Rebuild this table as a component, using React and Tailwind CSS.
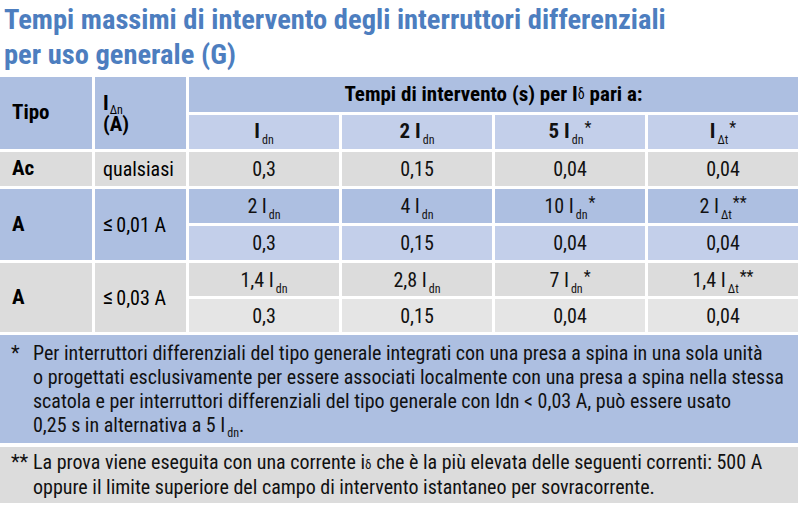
import React from "react";

const F = { fontFamily: "'Roboto Condensed', Roboto, sans-serif", fontStretch: "75%" };

const Sub = ({ children }) => (
  <span className="relative top-[6px] text-[12px] ml-[2px] font-normal">{children}</span>
);

const Idn = ({ pre, star, bold, sub = "dn" }) => (
  <span className="inline-flex items-baseline">
    {pre ? <span>{pre}&nbsp;</span> : null}
    <span className={bold ? "font-bold" : ""}>I</span>
    <Sub>{sub}</Sub>
    {star ? <span className="relative -top-[5px] ml-[1px] text-[16px] font-normal">{star}</span> : null}
  </span>
);

const Cell = ({ className = "", children }) => (
  <div className={"flex items-center justify-center text-[20px] text-[#111] " + className}>{children}</div>
);

export default function App() {
  const blue = "bg-[#adbfe1]";
  const blueL = "bg-[#c3cfea]";
  const gray = "bg-[#dcdcdc]";
  const grayL = "bg-[#e5e5e5]";
  return (
    <div className="w-[803px] h-[514px] bg-white overflow-hidden" style={F}>
      <div className="pl-[4px] pt-[2px] text-[#4d7ebf] font-bold text-[28.5px] leading-[35px]">
        <div>Tempi massimi di intervento degli interruttori differenziali</div>
        <div>per uso generale (G)</div>
      </div>
      <div className="mt-[5px] grid grid-cols-[92px_91px_150px_150px_150px_150px] grid-rows-[35px_34px_34px_34px_34px_33px_33px] gap-[3px] w-[798px]">
        <div className={blue + " row-span-2 flex items-center pl-[12px] font-bold text-[21px]"}>Tipo</div>
        <div className={blue + " row-span-2 flex flex-col justify-center pl-[8px] font-bold text-[21px] leading-[18px]"}>
          <div className="flex items-baseline">
            <span>I</span>
            <span className="relative top-[4px] text-[12px] ml-[1px] font-normal">Δn</span>
          </div>
          <div>(A)</div>
        </div>
        <div className={blue + " col-span-4 flex items-center justify-center font-bold text-[21px]"}>
          Tempi di intervento (s) per I<span className="text-[14px] font-normal">δ</span>&nbsp;pari a:
        </div>
        <Cell className={blueL + " font-bold text-[21px]"}><Idn bold /></Cell>
        <Cell className={blueL + " font-bold text-[21px]"}><Idn bold pre="2" /></Cell>
        <Cell className={blueL + " font-bold text-[21px]"}><Idn bold pre="5" star="*" /></Cell>
        <Cell className={blueL + " font-bold text-[21px]"}><Idn bold sub="Δt" star="*" /></Cell>

        <div className={gray + " flex items-center pl-[12px] font-bold text-[21px]"}>Ac</div>
        <div className={gray + " flex items-center pl-[8px] text-[20px]"}>qualsiasi</div>
        <Cell className={gray}>0,3</Cell>
        <Cell className={gray}>0,15</Cell>
        <Cell className={gray}>0,04</Cell>
        <Cell className={gray}>0,04</Cell>

        <div className={blue + " row-span-2 flex items-center pl-[12px] font-bold text-[21px]"}>A</div>
        <div className={blue + " row-span-2 flex items-center pl-[8px] text-[20px]"}><span className="text-[23px] mr-[3px]">≤</span>0,01 A</div>
        <Cell className={blue}><Idn pre="2" /></Cell>
        <Cell className={blue}><Idn pre="4" /></Cell>
        <Cell className={blue}><Idn pre="10" star="*" /></Cell>
        <Cell className={blue}><Idn pre="2" sub="Δt" star="**" /></Cell>
        <Cell className={blueL}>0,3</Cell>
        <Cell className={blueL}>0,15</Cell>
        <Cell className={blueL}>0,04</Cell>
        <Cell className={blueL}>0,04</Cell>

        <div className={gray + " row-span-2 flex items-center pl-[12px] font-bold text-[21px]"}>A</div>
        <div className={gray + " row-span-2 flex items-center pl-[8px] text-[20px]"}><span className="text-[23px] mr-[3px]">≤</span>0,03 A</div>
        <Cell className={gray}><Idn pre="1,4" /></Cell>
        <Cell className={gray}><Idn pre="2,8" /></Cell>
        <Cell className={gray}><Idn pre="7" star="*" /></Cell>
        <Cell className={gray}><Idn pre="1,4" sub="Δt" star="**" /></Cell>
        <Cell className={grayL}>0,3</Cell>
        <Cell className={grayL}>0,15</Cell>
        <Cell className={grayL}>0,04</Cell>
        <Cell className={grayL}>0,04</Cell>
      </div>
      <div className={blue + " mt-[3px] w-[798px] h-[108px] flex pt-[6px] pl-[11px] text-[20px] leading-[24px] text-[#111]"}>
        <div className="w-[22px] shrink-0">*</div>
        <div className="whitespace-nowrap">
          Per interruttori differenziali del tipo generale integrati con una presa a spina in una sola unità<br />
          o progettati esclusivamente per essere associati localmente con una presa a spina nella stessa<br />
          scatola e per interruttori differenziali del tipo generale con Idn &lt; 0,03 A, può essere usato<br />
          0,25 s in alternativa a 5 I<span className="relative top-[5px] text-[12px] ml-[2px]">dn</span>.
        </div>
      </div>
      <div className={gray + " mt-[4px] w-[798px] h-[56px] flex pt-[4px] pl-[11px] text-[20px] leading-[23px] text-[#111]"}>
        <div className="w-[22px] shrink-0">**</div>
        <div className="whitespace-nowrap">
          La prova viene eseguita con una corrente i<span className="text-[13px]">δ</span> che è la più elevata delle seguenti correnti: 500 A<br />
          oppure il limite superiore del campo di intervento istantaneo per sovracorrente.
        </div>
      </div>
    </div>
  );
}
